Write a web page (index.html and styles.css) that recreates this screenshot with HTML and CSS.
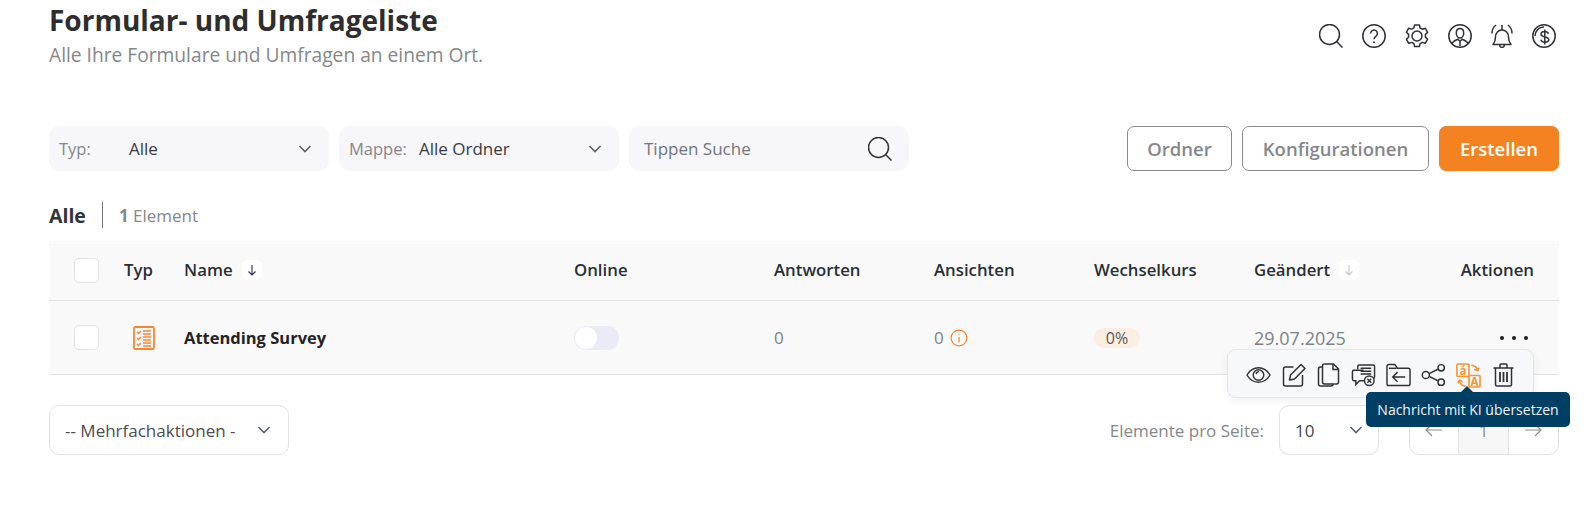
FILE: index.html
```html
<!DOCTYPE html>
<html lang="de">
<head>
<meta charset="utf-8">
<title>Formular- und Umfrageliste</title>
<link rel="stylesheet" href="styles.css">
</head>
<body>
<main class="page">
  <header class="top">
    <div>
      <h1 class="title">Formular- und Umfrageliste</h1>
      <p class="subtitle">Alle Ihre Formulare und Umfragen an einem Ort.</p>
    </div>
    <div class="top-icons">
      <svg class="ico24" viewBox="0 0 24 24"><circle cx="10.5" cy="10.5" r="10"/><path d="M17.8 17.8 23.5 23.5"/></svg>
      <svg class="ico24" viewBox="0 0 24 24"><circle cx="12" cy="12" r="11.2"/><path d="M8.6 9.4a3.4 3.4 0 1 1 5.4 2.8c-1.3.9-2 1.500-2 3"/><path d="M12 17.6v1.4" stroke-width="1.8"/></svg>
      <svg class="ico24" viewBox="0 0 24 24"><path d="M9.6 1h4.8l.7 3 2.2 1.2 3-.9 2.3 4.1-2.2 2.1v2.6l2.2 2.1-2.3 4.1-3-.9-2.2 1.2-.7 3H9.6l-.7-3-2.2-1.2-3 .9-2.3-4.1 2.2-2.1V10.400L1.400 8.300l2.300-4.100 3 .9 2.200-1.200z" stroke-linejoin="round"/><circle cx="12" cy="12" r="5"/></svg>
      <svg class="ico24" viewBox="0 0 24 24"><circle cx="12" cy="12" r="11.2"/><path d="M8.300 9c0-2.600 1.600-4.400 3.700-4.400s3.700 1.800 3.700 4.400-1.600 5-3.700 5-3.700-2.400-3.700-5z"/><path d="M4 20c.6-2.800 3.500-3.700 6-4.700l2 2.200 2-2.200c2.500 1 5.400 1.900 6 4.700"/><path d="M12 18v4"/></svg>
      <svg class="ico24 bell" viewBox="0 0 22 24"><path d="M2 20.500c1.600-1.800 2.500-3 2.500-7.500 0-4 2.700-7 6.500-7s6.500 3 6.500 7c0 4.500.9 5.700 2.500 7.500z" stroke-linejoin="round"/><path d="M8.500 21c.2 1.500 1.200 2.400 2.500 2.400s2.300-.9 2.500-2.400"/><path d="M11 6V1"/><path d="M5 1C2.300 3 1 6 1 9.500M17 1c2.700 2 4 5 4 8.500"/></svg>
      <svg class="ico24" viewBox="0 0 24 24"><circle cx="12" cy="12" r="11.200"/><path d="M3 12C3 7 7 3 12 3"/><path d="M16.500 9.800c-.4-1.400-1.900-2.200-3.800-2.200-2.200 0-3.700 1-3.700 2.600 0 3.700 7.800 1.700 7.800 5.300 0 1.700-1.700 2.700-3.900 2.700s-3.700-1-4-2.500M12.800 5.500v15"/></svg>
    </div>
  </header>

  <section class="toolbar">
    <div class="filter"><span class="filter-label">Typ:</span><span class="filter-value">Alle</span><svg class="chev" viewBox="0 0 14 8"><path d="M1.500 1 7 6.500 12.500 1"/></svg></div>
    <div class="filter"><span class="filter-label">Mappe:</span><span class="filter-value">Alle Ordner</span><svg class="chev" viewBox="0 0 14 8"><path d="M1.500 1 7 6.500 12.500 1"/></svg></div>
    <div class="filter search"><span class="filter-placeholder">Tippen Suche</span><svg class="ico24" viewBox="0 0 24 24"><circle cx="10.500" cy="10.500" r="10"/><path d="M17.800 17.800 23.500 23.500"/></svg></div>
    <div class="actions">
      <button class="btn btn-ordner">Ordner</button>
      <button class="btn btn-konfig">Konfigurationen</button>
      <button class="btn btn-primary">Erstellen</button>
    </div>
  </section>

  <div class="count-row"><strong class="count-all">Alle</strong><span class="count-sep"></span><span class="count-text"><b>1</b> Element</span></div>

  <section class="table">
    <div class="row head">
      <span class="check"></span>
      <span>Typ</span>
      <span class="name-cell">Name <i class="sort"><svg viewBox="0 0 10 12"><path d="M5 1v10M1.500 7.500 5 11l3.500-3.500"/></svg></i></span>
      <span>Online</span>
      <span>Antworten</span>
      <span>Ansichten</span>
      <span>Wechselkurs</span>
      <span class="name-cell">Geändert <i class="sort sort-off"><svg viewBox="0 0 10 12"><path d="M5 1v10M1.500 7.500 5 11l3.500-3.500"/></svg></i></span>
      <span class="right">Aktionen</span>
    </div>
    <div class="row body">
      <span class="check"></span>
      <svg class="survey" viewBox="0 0 22 24"><rect x="1" y="1" width="20" height="22" rx="1.500"/><path d="M4 6l1.500 1.500L8 5M4 12l1.500 1.500L8 11M4 18l1.500 1.500L8 17" stroke-width="1.400"/><path d="M10 5h8M10 8h8M10 11h8M10 14h8M10 17h8M10 20h8" stroke-width="1.600"/></svg>
      <strong class="survey-name">Attending Survey</strong>
      <span class="toggle"><i></i></span>
      <span class="muted">0</span>
      <span class="muted views">0 <svg class="info" viewBox="0 0 16 16"><circle cx="8" cy="8" r="7"/><path d="M8 7v5M8 4v1.200"/></svg></span>
      <span><em class="badge">0%</em></span>
      <span class="muted date">29.07.2025</span>
      <span class="dots"><i></i><i></i><i></i></span>
    </div>
    <div class="popover">
      <svg viewBox="0 0 26 24"><path d="M1 12c3-5 7-7.500 12-7.500S22 7 25 12c-3 5-7 7.500-12 7.500S4 17 1 12z"/><circle cx="13" cy="12" r="5.500"/><path d="M10.500 11a3 3 0 0 1 3-2.500"/></svg>
      <svg viewBox="0 0 24 24"><path d="M12 4H4a2 2 0 0 0-2 2v15a2 2 0 0 0 2 2h15a2 2 0 0 0 2-2v-9"/><path d="M8 17l1-5L19.500 1.500l4 4L13 16z" stroke-linejoin="round"/></svg>
      <svg viewBox="0 0 24 24"><path d="M8 1h9l5 5v13a2 2 0 0 1-2 2h-2"/><path d="M16.500 1v5.500H22"/><path d="M8 1a2 2 0 0 0-2 2v16a2 2 0 0 0 2 2h10"/><path d="M6 4H4a2 2 0 0 0-2 2v15a2 2 0 0 0 2 2h10a3 3 0 0 0 3-2"/></svg>
      <svg viewBox="0 0 26 24"><path d="M7 6V3a1.500 1.500 0 0 1 1.500-1.500H23A1.500 1.500 0 0 1 24.500 3v11a1.500 1.500 0 0 1-1.500 1.500"/><path d="M10 5h11M10 8h11M10 11h11" /><path d="M13 7H3a1.500 1.500 0 0 0-1.500 1.500v8A1.500 1.500 0 0 0 3 18h2v4l4-4h5"/><circle cx="19" cy="18" r="5"/><path d="M17 16l4 4M21 16l-4 4"/></svg>
      <svg viewBox="0 0 26 24"><path d="M1 3a2 2 0 0 1 2-2h6l3 4h11a2 2 0 0 1 2 2v14a2 2 0 0 1-2 2H3a2 2 0 0 1-2-2z" stroke-linejoin="round"/><path d="M3 5h8"/><path d="M20 14H7M12 9l-5 5 5 5"/></svg>
      <svg viewBox="0 0 26 24"><circle cx="5" cy="12" r="3.700"/><circle cx="21" cy="4.500" r="3.300"/><circle cx="21" cy="19.500" r="3.300"/><path d="M8.500 10.500l9-4.500M8.500 13.500l9 4.500"/></svg>
      <svg class="translate" viewBox="0 0 26 26"><rect x="1" y="1" width="12.500" height="13" rx="1" stroke-width="1.700"/><rect x="13.500" y="13" width="11.500" height="12" rx="1" stroke-width="1.700"/><text class="tr-a" x="7.200" y="12">á</text><text class="tr-b" x="19.300" y="23.500">A</text><path d="M16 2.500c3 .2 5.500 1.500 6.500 4.500M19 6.500l3.500 1.500 1.500-3.200M10 24c-3-.2-5.200-1.500-6.200-4.500M7 19.500 3.600 18 2 21.200" stroke-width="1.800"/></svg>
      <svg viewBox="0 0 22 24"><path d="M1 5h20M7.500 5V2a1 1 0 0 1 1-1h5a1 1 0 0 1 1 1v3"/><path d="M3 5v16.500a1.500 1.500 0 0 0 1.500 1.500h13a1.500 1.500 0 0 0 1.500-1.500V5"/><path d="M7.500 9v10M11 9v10M14.500 9v10" stroke-width="1.800"/></svg>
    </div>
    <div class="tooltip">Nachricht mit KI übersetzen</div>
  </section>

  <footer class="bottom">
    <div class="bulk">-- Mehrfachaktionen -<svg class="chev" viewBox="0 0 14 8"><path d="M1.500 1 7 6.500 12.500 1"/></svg></div>
    <div class="paging">
      <span class="per-page">Elemente pro Seite:</span>
      <div class="size">10<svg class="chev" viewBox="0 0 14 8"><path d="M1.500 1 7 6.500 12.500 1"/></svg></div>
      <div class="pager">
        <span><svg viewBox="0 0 18 14"><path d="M17 7H1M7 1 1 7l6 6"/></svg></span>
        <span class="current">1</span>
        <span><svg viewBox="0 0 18 14"><path d="M1 7h16M11 1l6 6-6 6"/></svg></span>
      </div>
    </div>
  </footer>
</main>
</body>
</html>
```
FILE: styles.css
```css
* { box-sizing: border-box; }
html, body { margin: 0; background: #fff; }
body { font-family: "Open Sans", "Noto Sans", sans-serif; color: #2b2b2b; height: 522px; overflow: hidden; }
svg { fill: none; stroke: currentColor; stroke-width: 1.5; flex: none; display: block; }
.page { padding: 0 28px 0 49px; }

.top { display: flex; justify-content: space-between; align-items: flex-start; }
.title { margin: 0; font-size: 28px; line-height: 40px; font-weight: 700; color: #2e2e2e; }
.subtitle { margin: 2px 0 0; font-size: 19.200px; line-height: 26px; color: #85878a; }
.top-icons { display: flex; gap: 19px; color: #2f3136; margin: 24px 3px 0 0; }
.ico24 { width: 24px; height: 24px; }
.bell { width: 22px; }

.toolbar { display: flex; gap: 10px; margin-top: 58px; align-items: stretch; }
.filter { width: 280px; height: 45px; background: #f6f6fb; border-radius: 11px; display: flex; align-items: center; padding: 0 17px 0 10px; font-size: 17px; }
.filter-label { color: #85878a; width: 70px; font-size: 16.500px; }
.filter-value { color: #3b3c40; flex: 1; }
.filter-placeholder { color: #72757c; flex: 1; padding-left: 5px; }
.chev { width: 14px; height: 8px; color: #5a6172; stroke-width: 1.600; }
.search { padding-right: 17px; color: #333; }
.actions { margin-left: auto; display: flex; gap: 10px; }
.btn { height: 45px; border: 1px solid #8c8c8c; border-radius: 7px; background: #fff; font: 600 18.500px "Open Sans", sans-serif; color: #85878a; padding: 0; }
.btn-ordner { width: 105px; }
.btn-konfig { width: 187px; }
.btn-primary { width: 120px; background: #f58220; border-color: #f58220; color: #fff; }

.count-row { display: flex; align-items: center; height: 26px; margin-top: 31px; }
.count-all { font-size: 19.500px; color: #333; }
.count-sep { width: 1px; height: 26px; background: #777; margin: 0 16px; }
.count-text { font-size: 17px; color: #85878a; }

.table { position: relative; margin-top: 13px; background: #f9f9f9; }
.row { display: grid; grid-template-columns: 50px 60px 390px 200px 160px 160px 160px 140px 1fr; align-items: center; padding: 0 25px; }
.head { height: 60px; padding-bottom: 2px; border-bottom: 1px solid #e3e3e3; font-size: 16.800px; font-weight: 600; color: #2a2f36; }
.body { height: 74px; border-bottom: 1px solid #e3e3e3; font-size: 17px; }
.check { width: 25px; height: 25px; background: #fff; border: 1px solid #e2e2e2; border-radius: 5px; }
.head .check { margin-top: 2px; }
.name-cell { display: flex; align-items: center; gap: 9px; }
.sort { width: 20px; height: 20px; background: #fff; border-radius: 5px; display: flex; align-items: center; justify-content: center; color: #2a2f56; }
.sort svg { width: 10px; height: 12px; stroke-width: 1.100; }
.sort-off { color: #c7c7c7; }
.right { text-align: right; }
.survey { width: 22px; height: 24px; color: #f58634; margin-left: 9px; stroke-width: 1.800; }
.survey-name { font-size: 16.500px; color: #232323; }
.toggle { width: 45px; height: 24px; background: #ebebf7; border-radius: 12px; display: flex; align-items: center; padding-left: 1px; }
.toggle i { width: 22px; height: 22px; border-radius: 50%; background: #fff; }
.muted { color: #7d8189; }
.date { font-size: 18px; }
.views { display: flex; align-items: center; gap: 6px; }
.info { width: 18px; height: 18px; color: #f58634; stroke-width: 1.100; }
.badge { display: inline-block; width: 46px; height: 20px; line-height: 20px; text-align: center; background: #fdeee2; border-radius: 10px; font-style: normal; color: #55585e; font-size: 16px; }
.dots { display: flex; justify-content: flex-end; gap: 8px; padding-right: 6px; }
.dots i { width: 4px; height: 4px; border-radius: 50%; background: #1d1d1d; }

.popover { position: absolute; left: 1178px; top: 108px; width: 307px; height: 49px; background: #f7f8fb; border: 1px solid #e4e4e8; border-radius: 9px; box-shadow: 0 3px 10px rgba(0,0,0,.06); display: flex; align-items: center; gap: 10px; padding: 3px 18px 0; color: #2f3136; }
.popover svg { width: 25px; height: 24px; stroke-width: 1.500; }
.popover .translate { color: #f5962f; height: 25px; }
.tr-a, .tr-b { fill: currentColor; stroke: none; font-family: "Open Sans", sans-serif; font-weight: 700; text-anchor: middle; }
.tr-a { font-size: 12px; }
.tr-b { font-size: 12px; }
.tooltip { position: absolute; left: 1317px; top: 151px; width: 204px; height: 35px; background: #003e63; color: #f2f5f8; border-radius: 5px; font-size: 14px; line-height: 35px; text-align: center; white-space: nowrap; }
.tooltip::before { content: ""; position: absolute; left: 95px; top: -6px; border: 6px solid transparent; border-top: 0; border-bottom-color: #003e63; }

.bottom { display: flex; justify-content: space-between; align-items: center; margin-top: 30px; }
.bulk { width: 240px; height: 50px; border: 1px solid #e2e2e2; border-radius: 10px; display: flex; align-items: center; justify-content: space-between; padding: 0 17px 0 15px; font-size: 17px; color: #4a4d52; }
.paging { display: flex; align-items: center; }
.per-page { font-size: 17px; color: #85878a; margin-right: 15px; }
.size { width: 100px; height: 50px; border: 1px solid #e2e2e2; border-radius: 10px; display: flex; align-items: center; justify-content: space-between; padding: 0 15px; font-size: 17px; color: #44474d; margin-right: 30px; }
.pager { width: 150px; height: 50px; border: 1px solid #e2e2e2; border-radius: 10px; display: grid; grid-template-columns: 1fr 1fr 1fr; overflow: hidden; color: #8a8d92; }
.pager span { display: flex; align-items: center; justify-content: center; border-right: 1px solid #e2e2e2; font-size: 17px; }
.pager span:last-child { border-right: 0; }
.pager svg { width: 18px; height: 14px; stroke-width: 1.200; }
.current { background: #f7f7f7; }
```
